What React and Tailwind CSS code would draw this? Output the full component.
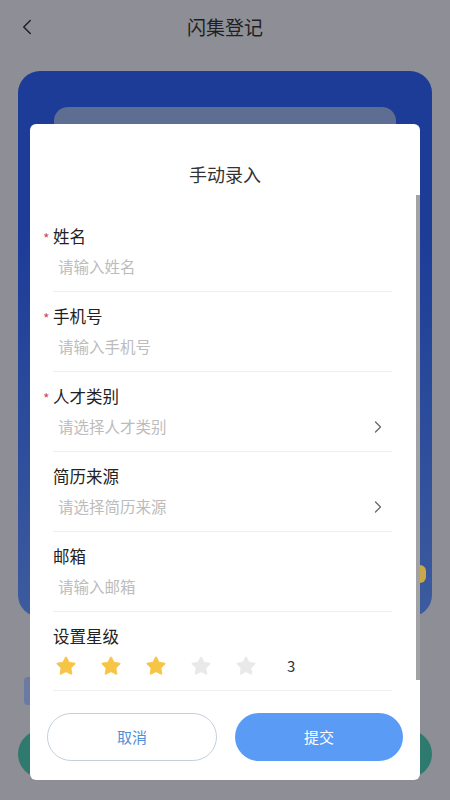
import { ChevronLeft, ChevronRight, Star } from "lucide-react";

const FIELDS = [
  { label: "姓名", placeholder: "请输入姓名", required: true },
  { label: "手机号", placeholder: "请输入手机号", required: true },
  { label: "人才类别", placeholder: "请选择人才类别", required: true, select: true },
  { label: "简历来源", placeholder: "请选择简历来源", select: true },
  { label: "邮箱", placeholder: "请输入邮箱" },
];

function FieldRow({ field }) {
  return (
    <div className="border-b border-[#efefef] pt-[13px] pb-[13px]">
      <div className="relative flex h-[22px] items-center text-[16.5px] leading-[22px] text-[#222]">
        {field.required ? <span className="absolute -left-[10px] top-[2px] text-[14px] text-[#c8506a]">*</span> : null}
        {field.label}
      </div>
      <div className="mt-[9px] flex h-[22px] items-center justify-between pl-[5px] text-[15.5px] text-[#bcbcbc]">
        <span>{field.placeholder}</span>
        {field.select ? <ChevronRight size={20} strokeWidth={1.5} className="mr-[4px] text-[#666]" /> : null}
      </div>
    </div>
  );
}

function StarRow({ value }) {
  return (
    <div className="border-b border-[#efefef] pt-[13px] pb-[13px]">
      <div className="flex h-[22px] items-center text-[16.5px] text-[#222]">设置星级</div>
      <div className="mt-[8px] flex h-[22px] items-center pl-[2px]">
        {[1, 2, 3, 4, 5].map((n) => (
          <Star
            key={n}
            size={22}
            strokeWidth={1}
            className={`mr-[23px] ${n <= value ? "fill-[#f6c545] text-[#f6c545]" : "fill-[#e9e9e9] text-[#e9e9e9]"}`}
          />
        ))}
        <span className="ml-[7px] text-[15px] text-[#333]">{value}</span>
      </div>
    </div>
  );
}

export default function App() {
  return (
    <div className="relative h-[800px] w-[450px] overflow-hidden bg-[#8e8f96] font-['Noto_Sans_CJK_SC','Noto_Sans',sans-serif]">
      {/* page under the overlay */}
      <div className="flex h-[54px] items-center px-[14px]">
        <ChevronLeft size={26} strokeWidth={1.4} className="text-[#222]" />
        <div className="flex-1 pr-[26px] text-center text-[19px] text-[#1f1f23]">闪集登记</div>
      </div>
      <div className="mx-[18px] mt-[17px] h-[546px] rounded-[22px] bg-gradient-to-b from-[#1c3c98] from-30% to-[#3d5b9e] pt-[36px]">
        <div className="relative mx-[36px] h-[300px] rounded-[14px] bg-[#5e6e92]" />
        <div className="ml-auto mt-[158px] mr-[6px] h-[18px] w-[12px] rounded-full bg-[#c9a84a]" />
      </div>
      <div className="ml-[24px] mt-[60px] h-[28px] w-[60px] rounded-[4px] bg-[#6a7aa0]" />
      <div className="mt-[25px] flex justify-between px-[18px]">
        <div className="h-[48px] w-[160px] rounded-full bg-[#2f7a6e]" />
        <div className="h-[48px] w-[160px] rounded-full bg-[#2f7a6e]" />
      </div>

      {/* dialog */}
      <div className="absolute left-[30px] top-[124px] flex h-[656px] w-[390px] flex-col rounded-[6px] bg-white">
        <div className="flex h-[71px] items-end justify-center pb-[3px] text-[18px] text-[#333]">
          <span className="leading-[36px]">手动录入</span>
        </div>
        <div className="flex h-[498px]">
          <div className="flex-1 pl-[23px] pr-[24px] pt-[17px]">
            {FIELDS.map((field) => (
              <FieldRow key={field.label} field={field} />
            ))}
            <StarRow value={3} />
          </div>
          <div className="h-[485px] w-[4px] bg-[#a2a2a4]" />
        </div>
        <div className="mt-[20px] flex gap-[18px] px-[17px]">
          <button type="button" className="h-[48px] flex-1 rounded-full border border-[#c4d0dc] text-[15px] text-[#4f8fd8]">
            取消
          </button>
          <button type="button" className="h-[48px] flex-1 rounded-full bg-[#5a9cf5] text-[15px] text-white">
            提交
          </button>
        </div>
      </div>
    </div>
  );
}
